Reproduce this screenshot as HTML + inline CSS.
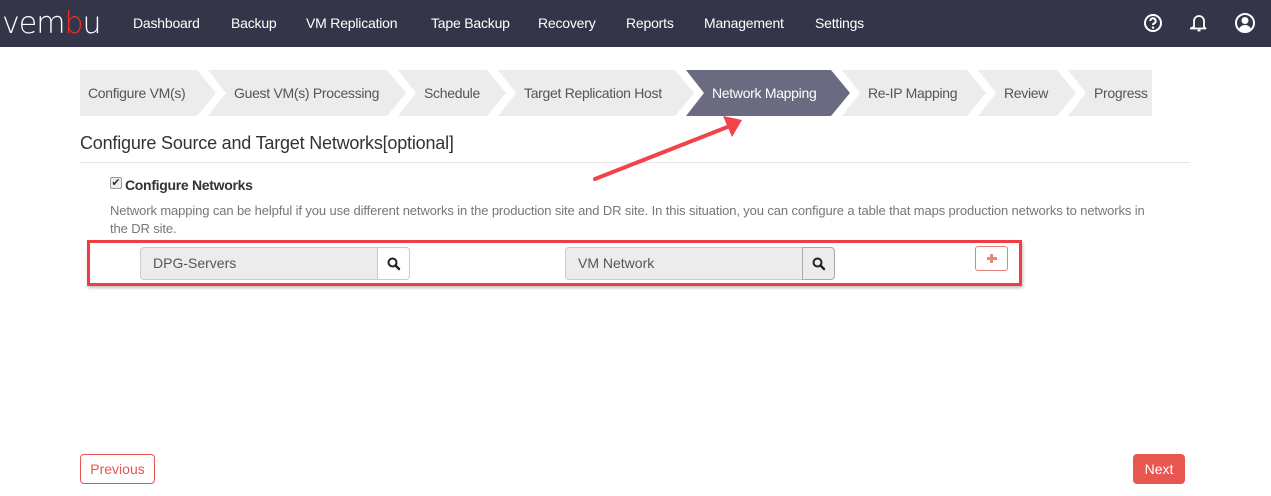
<!DOCTYPE html>
<html><head><meta charset="utf-8"><style>
*{margin:0;padding:0;box-sizing:border-box}
body{width:1271px;height:496px;background:#fff;font-family:"Liberation Sans",sans-serif;position:relative;overflow:hidden;color:#444}
.nav{position:absolute;left:0;top:0;width:1271px;height:47px;background:#353549}
.nav .m{position:absolute;top:15px;color:#fff;font-size:14px;letter-spacing:-0.2px}
.logo{position:absolute;left:2px;top:6px;color:#fff;font-size:30px;letter-spacing:-1px;font-family:"DejaVu Sans",sans-serif;font-weight:300}
.st{position:absolute;top:70px;height:46px;background:#ececec;color:#555;font-size:14px;line-height:46px;letter-spacing:-0.3px}
.st span{position:absolute;top:0}
.a{background:#6a6a80;color:#fff}
.abs{position:absolute}
</style></head><body>
<div class="nav">
<div class="logo">vem<span style="color:#e8321f">b</span>u</div>
<div class="m" style="left:133px">Dashboard</div>
<div class="m" style="left:231px">Backup</div>
<div class="m" style="left:306px">VM Replication</div>
<div class="m" style="left:431px">Tape Backup</div>
<div class="m" style="left:538px">Recovery</div>
<div class="m" style="left:626px">Reports</div>
<div class="m" style="left:704px">Management</div>
<div class="m" style="left:815px">Settings</div>
<svg class="abs" style="left:1143px;top:13px" width="20" height="20" viewBox="0 0 20 20"><circle cx="10" cy="10" r="8" fill="none" stroke="#fff" stroke-width="2"/><path d="M7.3 8a2.7 2.7 0 1 1 3.6 2.5c-.7.3-.9.8-.9 1.5" fill="none" stroke="#fff" stroke-width="2"/><circle cx="10" cy="14.6" r="1.2" fill="#fff"/></svg>
<svg class="abs" style="left:1190px;top:13px" width="18" height="20" viewBox="0 0 18 20"><path d="M4 14V8a5 5 0 0 1 10 0v6l1.5 1.5h-15z" fill="none" stroke="#fff" stroke-width="1.8" stroke-linejoin="round"/><path d="M7.5 17.5h3" stroke="#fff" stroke-width="1.8"/></svg>
<svg class="abs" style="left:1234px;top:12px" width="22" height="22" viewBox="0 0 22 22"><circle cx="11" cy="11" r="9" fill="none" stroke="#fff" stroke-width="2"/><circle cx="11" cy="8.5" r="3.5" fill="#fff"/><path d="M4.8 17.2c1.5-3 3.6-4.2 6.2-4.2s4.7 1.2 6.2 4.2A9 9 0 0 1 4.8 17.2z" fill="#fff"/></svg>
</div>

<div class="st" style="left:80px;width:136px;clip-path:polygon(0 0,117px 0,136px 23px,117px 46px,0 46px)"><span style="left:8px">Configure VM(s)</span></div>
<div class="st" style="left:208px;width:198px;clip-path:polygon(0 0,179px 0,198px 23px,179px 46px,0 46px,18px 23px)"><span style="left:26px">Guest VM(s) Processing</span></div>
<div class="st" style="left:398px;width:108px;clip-path:polygon(0 0,89px 0,108px 23px,89px 46px,0 46px,18px 23px)"><span style="left:26px">Schedule</span></div>
<div class="st" style="left:498px;width:196px;clip-path:polygon(0 0,177px 0,196px 23px,177px 46px,0 46px,18px 23px)"><span style="left:26px">Target Replication Host</span></div>
<div class="st a" style="left:686px;width:164px;clip-path:polygon(0 0,145px 0,164px 23px,145px 46px,0 46px,18px 23px)"><span style="left:26px">Network Mapping</span></div>
<div class="st" style="left:842px;width:144px;clip-path:polygon(0 0,125px 0,144px 23px,125px 46px,0 46px,18px 23px)"><span style="left:26px">Re-IP Mapping</span></div>
<div class="st" style="left:978px;width:98px;clip-path:polygon(0 0,79px 0,98px 23px,79px 46px,0 46px,18px 23px)"><span style="left:26px">Review</span></div>
<div class="st" style="left:1068px;width:84px;clip-path:polygon(0 0,84px 0,84px 46px,0 46px,18px 23px)"><span style="left:26px">Progress</span></div>

<div class="abs" style="left:80px;top:133px;font-size:18px;color:#333;letter-spacing:-0.2px">Configure Source and Target Networks[optional]</div>
<div class="abs" style="left:80px;top:162px;width:1110px;height:1px;background:#e6e6e6"></div>

<svg class="abs" style="left:585px;top:110px" width="170" height="80"><line x1="10" y1="69" x2="145" y2="16" stroke="#f0434a" stroke-width="4" stroke-linecap="round"/><polygon points="157,10 138,6 147,27" fill="#f0434a"/></svg>

<div class="abs" style="left:110px;top:177px;width:12px;height:12px;border:1px solid #999;border-radius:2px;background:#eee;font-size:11px;line-height:10px;text-align:center;color:#333">✔</div>
<div class="abs" style="left:125px;top:177px;font-size:14px;color:#333;font-weight:bold;letter-spacing:-0.3px">Configure Networks</div>
<div class="abs" style="left:110px;top:202px;font-size:13px;color:#777;letter-spacing:-0.12px;white-space:nowrap;line-height:18px">Network mapping can be helpful if you use different networks in the production site and DR site. In this situation, you can configure a table that maps production networks to networks in<br>the DR site.</div>

<div class="abs" style="left:87px;top:240px;width:935px;height:46px;border:3px solid #ee3e44;box-shadow:1px 2px 3px rgba(0,0,0,.25)"></div>
<div class="abs" style="left:140px;top:247px;width:238px;height:33px;background:#ececec;border:1px solid #ccc;border-right:none;border-radius:4px 0 0 4px;font-size:14px;line-height:31px;padding-left:12px;color:#555">DPG-Servers</div>
<div class="abs" style="left:377px;top:247px;width:33px;height:33px;background:#fff;border:1px solid #ccc;border-radius:0 4px 4px 0"></div>
<div class="abs" style="left:565px;top:247px;width:238px;height:33px;background:#ececec;border:1px solid #ccc;border-right:none;border-radius:4px 0 0 4px;font-size:14px;line-height:31px;padding-left:12px;color:#555">VM Network</div>
<div class="abs" style="left:802px;top:247px;width:33px;height:33px;background:#ececec;border:1px solid #aaa;border-radius:0 4px 4px 0"></div>
<svg class="abs" style="left:387px;top:257px" width="14" height="14" viewBox="0 0 14 14"><circle cx="5.5" cy="5.5" r="4" fill="none" stroke="#222" stroke-width="2"/><path d="M8.5 8.5l3.5 3.5" stroke="#222" stroke-width="2.4" stroke-linecap="round"/></svg>
<svg class="abs" style="left:812px;top:257px" width="14" height="14" viewBox="0 0 14 14"><circle cx="5.5" cy="5.5" r="4" fill="none" stroke="#222" stroke-width="2"/><path d="M8.5 8.5l3.5 3.5" stroke="#222" stroke-width="2.4" stroke-linecap="round"/></svg>
<div class="abs" style="left:975px;top:246px;width:33px;height:25px;border:1px solid #e58080;border-radius:3px"></div>
<div class="abs" style="left:987px;top:257px;width:10px;height:3px;background:#e58a80"></div>
<div class="abs" style="left:990px;top:254px;width:3px;height:9px;background:#e58a80"></div>

<div class="abs" style="left:80px;top:454px;width:75px;height:30px;border:1px solid #e85550;border-radius:4px;color:#e85550;font-size:14px;text-align:center;line-height:28px">Previous</div>
<div class="abs" style="left:1133px;top:454px;width:52px;height:30px;background:#e8574f;border-radius:4px;color:#fff;font-size:14px;text-align:center;line-height:30px">Next</div>
</body></html>
